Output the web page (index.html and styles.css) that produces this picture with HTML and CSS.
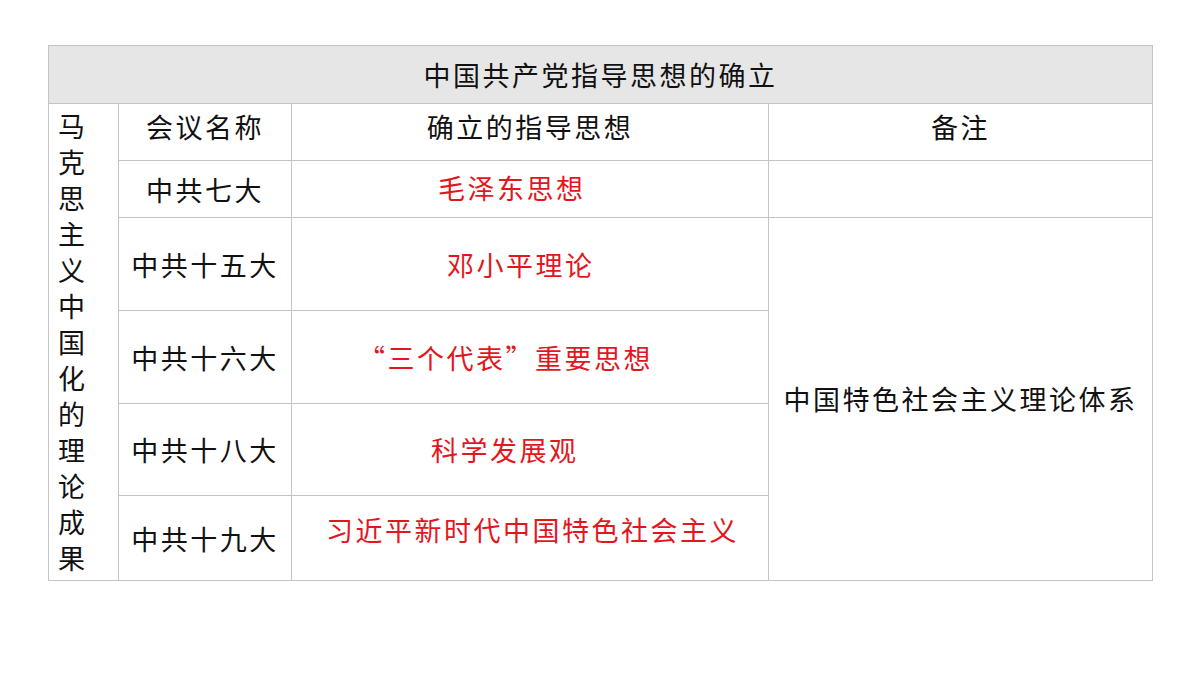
FILE: index.html
```html
<!DOCTYPE html>
<html lang="zh-CN">
<head>
<meta charset="utf-8">
<title>中国共产党指导思想的确立</title>
<link rel="stylesheet" href="styles.css">
</head>
<body>
<table class="grid">
  <colgroup>
    <col class="c-side">
    <col class="c-meet">
    <col class="c-idea">
    <col class="c-note">
  </colgroup>
  <tr class="r-title">
    <td colspan="4" class="title">中国共产党指导思想的确立</td>
  </tr>
  <tr class="r-head">
    <td rowspan="6" class="side"><span class="side-text">马克思主义中国化的理论成果</span></td>
    <td class="head">会议名称</td>
    <td class="head">确立的指导思想</td>
    <td class="head">备注</td>
  </tr>
  <tr class="r-short">
    <td class="meet">中共七大</td>
    <td class="idea i-mao">毛泽东思想</td>
    <td></td>
  </tr>
  <tr class="r-tall">
    <td class="meet">中共十五大</td>
    <td class="idea i-deng">邓小平理论</td>
    <td rowspan="4" class="note">中国特色社会主义理论体系</td>
  </tr>
  <tr class="r-tall">
    <td class="meet">中共十六大</td>
    <td class="idea i-three">“三个代表”重要思想</td>
  </tr>
  <tr class="r-tall2">
    <td class="meet">中共十八大</td>
    <td class="idea i-sci">科学发展观</td>
  </tr>
  <tr class="r-last">
    <td class="meet">中共十九大</td>
    <td class="idea i-xi">习近平新时代中国特色社会主义</td>
  </tr>
</table>
</body>
</html>
```
FILE: styles.css
```css
html, body {
  margin: 0;
  padding: 0;
  background: #ffffff;
}

body {
  font-family: "Noto Sans CJK SC", "Noto Sans", sans-serif;
  color: #111111;
  padding: 45px 0 0 48px;
}

.grid {
  border-collapse: collapse;
  table-layout: fixed;
  width: 1104px;
  font-size: 27px;
  letter-spacing: 2.5px;
  line-height: 1;
}

.grid td {
  border: 1px solid #c4c4c4;
  padding: 0;
  text-align: center;
  vertical-align: middle;
}

.c-side { width: 70px; }
.c-meet { width: 173px; }
.c-idea { width: 477px; }
.c-note { width: 384px; }

.r-title { height: 58px; }
.r-head { height: 57px; }
.r-short { height: 57px; }
.r-tall { height: 93px; }
.r-tall2 { height: 92px; }
.r-last { height: 85px; }

.title {
  background: #e6e6e6;
}

.grid td.head {
  padding-bottom: 12px;
}

.grid td.side {
  text-align: left;
  vertical-align: middle;
  padding: 0 0 0 9px;
}

.side-text {
  display: block;
  width: 28px;
  font-size: 27px;
  letter-spacing: 0;
  line-height: 36px;
  word-break: break-all;
}

.idea {
  color: #e3161d;
}

.grid td.idea {
  text-align: left;
}

.grid td.i-mao { padding-left: 146px; padding-bottom: 4px; }
.grid td.i-deng { padding-left: 155px; }
.grid td.i-three { padding-left: 66px; }
.grid td.i-sci { padding-left: 139px; }
.grid td.i-xi { padding-left: 34px; padding-bottom: 18px; }

.grid td.note {
  padding-bottom: 2px;
}
```
